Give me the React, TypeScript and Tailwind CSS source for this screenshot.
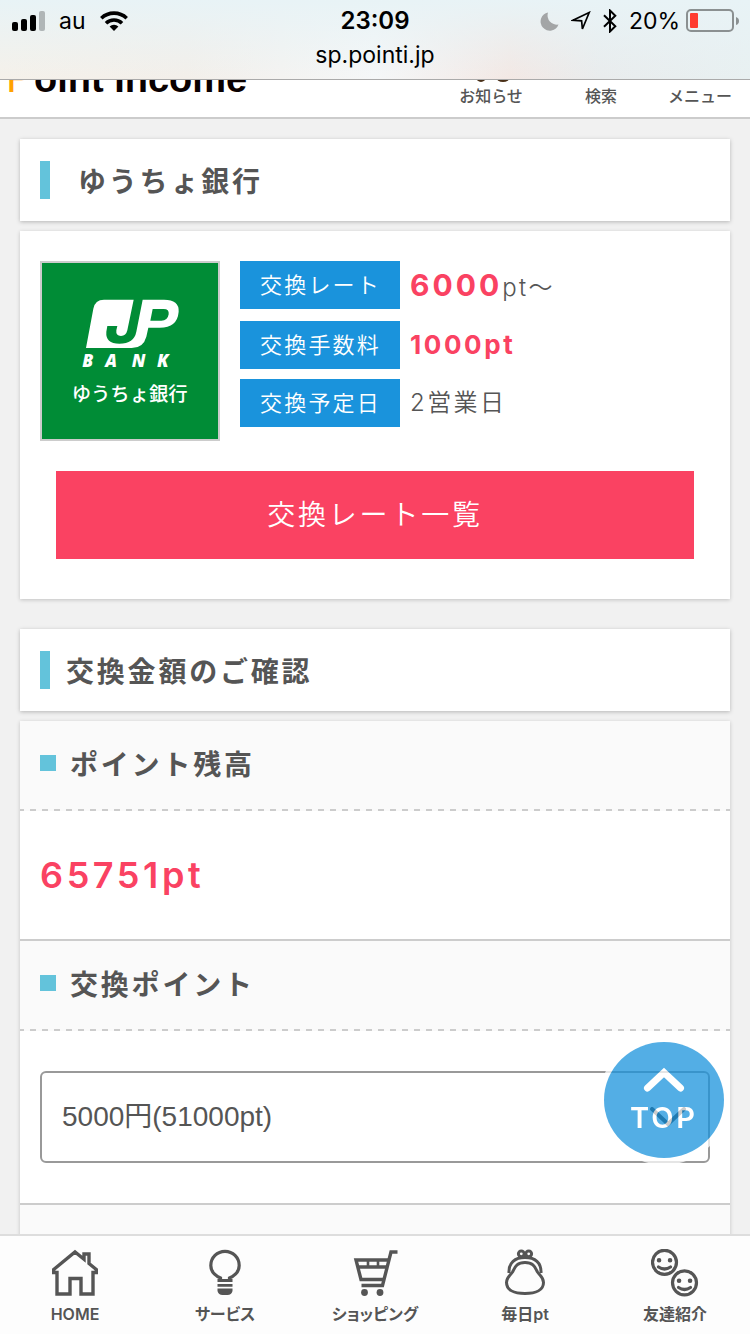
import type { ReactNode } from "react";

const NAV_ITEMS = [
  { label: "HOME", icon: <HomeIcon /> },
  { label: "サービス", icon: <BulbIcon /> },
  { label: "ショッピング", icon: <CartIcon /> },
  { label: "毎日pt", icon: <PurseIcon /> },
  { label: "友達紹介", icon: <SmileysIcon /> },
];

const AMOUNTS = ["5000円(51000pt)"];

export default function App() {
  return (
    <div className="flex h-dvh flex-col overflow-hidden bg-[#f1f1f1] font-['Liberation_Sans','Noto_Sans_CJK_JP',sans-serif] text-[#555]">
      <StatusBar />
      <SiteHeader />

      <main className="flex min-h-0 flex-1 flex-col overflow-hidden px-5 pt-5 font-['Noto_Sans_CJK_JP',sans-serif] *:shrink-0">
        <SectionTitle className="gap-7">ゆうちょ銀行</SectionTitle>

        <section className="mt-2.5 bg-white px-5 pt-[30px] pb-10 shadow-[0_1px_4px_rgba(0,0,0,0.2)]">
          <div className="flex gap-5">
            <BankLogo />
            <dl className="flex flex-1 flex-col gap-2.5">
              <RateRow label="交換レート" className="pb-0.5">
                <strong className="text-[30px] font-bold text-[#fa4262]">6000</strong>
                pt〜
              </RateRow>
              <RateRow label="交換手数料">
                <strong className="text-[26px] font-bold text-[#fa4262]">1000pt</strong>
              </RateRow>
              <RateRow label="交換予定日">2営業日</RateRow>
            </dl>
          </div>
          <button className="mx-4 mt-[30px] h-[88px] w-[calc(100%-32px)] bg-[#fa4262] pb-1 text-[28px] font-[350] tracking-widest text-white">
            交換レート一覧
          </button>
        </section>

        <SectionTitle className="mt-[30px] gap-4">交換金額のご確認</SectionTitle>

        <section className="mt-2.5 bg-white shadow-[0_1px_4px_rgba(0,0,0,0.2)]">
          <SubTitle>ポイント残高</SubTitle>
          <p className="box-content flex h-32 items-center border-b-2 border-[#ccc] px-5 font-['Inter',sans-serif] text-4xl font-semibold tracking-widest text-[#fa4262]">
            65751pt
          </p>
          <SubTitle id="amount-label">交換ポイント</SubTitle>
          <div className="border-b-2 border-[#ccc] px-5 py-10">
            <div className="relative">
              <select
                aria-labelledby="amount-label"
                className="block h-[92px] w-full appearance-none rounded-md border-2 border-[#999] bg-white px-5 font-['Liberation_Sans','Noto_Sans_CJK_JP',sans-serif] text-[28px] text-[#555]"
              >
                {AMOUNTS.map((amount) => (
                  <option key={amount}>{amount}</option>
                ))}
              </select>
              <svg
                className="pointer-events-none absolute top-9 right-6 h-5 w-9"
                viewBox="0 0 36 20"
                fill="none"
                stroke="#333"
                strokeWidth="4"
                strokeLinecap="round"
              >
                <path d="M2 2l16 15L34 2" />
              </svg>
            </div>
          </div>
          <div className="h-[88px] bg-[#fafafa]" />
        </section>
      </main>

      <TopButton />

      <nav className="grid grid-cols-5 border-t-2 border-[#ddd] bg-[#fdfdfd] pt-[13px] pb-2">
        {NAV_ITEMS.map((item) => (
          <a
            key={item.label}
            href="#"
            className="flex flex-col items-center gap-[5px] font-['Inter','Noto_Sans_CJK_JP',sans-serif] text-base leading-6 font-semibold [font-feature-settings:'palt']"
          >
            {item.icon}
            <span>{item.label}</span>
          </a>
        ))}
      </nav>
    </div>
  );
}

function StatusBar() {
  return (
    <div className="border-b border-[#aaa] bg-[linear-gradient(to_bottom,#e8f3f6,transparent),linear-gradient(to_right,#f5f1ea,#f3efea_25%,#f5f7f8_50%,#f3e8e4_68%,#e9eced_80%,#e8f0f1)] pt-[5px] pb-2 font-['Inter',sans-serif] text-[23px] leading-8 text-black">
      <div className="grid h-8 grid-cols-[1fr_auto_1fr] items-center">
        <div className="flex items-center gap-3.5 pl-3">
          <svg className="h-5 w-[33px]" viewBox="0 0 33 20">
            <rect x="0" y="11" width="6" height="9" rx="2" />
            <rect x="9" y="8" width="6" height="12" rx="2" />
            <rect x="18" y="4" width="6" height="16" rx="2" />
            <rect x="27" y="0" width="6" height="20" rx="2" fill="#b0b6b7" />
          </svg>
          <span>au</span>
          <svg className="h-5 w-7" viewBox="0 0 28 20" fill="none" stroke="#000" strokeWidth="3.6">
            <path d="M1.3 7.2a18.5 18.5 0 0 1 25.4 0" />
            <path d="M6 12.3a11.5 11.5 0 0 1 16 0" />
            <path d="M14 20l-4.4-4.6a6.4 6.4 0 0 1 8.8 0z" fill="#000" stroke="none" />
          </svg>
        </div>
        <span className="text-2xl leading-8 font-semibold">23:09</span>
        <div className="flex items-center justify-end pr-2.5">
          <svg className="mr-3 size-[19px]" viewBox="0 0 19 19" fill="#a3a5a6">
            <path d="M8 .5A9.200 9.200 0 1 0 18.500 12.500 9.300 9.300 0 0 1 8 .5z" />
          </svg>
          <svg className="mr-3 size-5" viewBox="0 0 20 20" fill="none" stroke="#000" strokeWidth="1.7">
            <path d="M18.200 1.500L2 9.200l8.600.6.8 8.200z" />
          </svg>
          <svg className="mr-3 h-6 w-3.5" viewBox="0 0 14 24" fill="none" stroke="#000" strokeWidth="2">
            <path d="M1 6.300l11.300 11L7 22.500v-21l5.300 5.200L1 17.700" />
          </svg>
          <span>20%</span>
          <svg className="ml-1.5 h-6 w-[54px]" viewBox="0 0 54 24">
            <rect x="1" y="1" width="46" height="21" rx="4" fill="none" stroke="#8b9091" strokeWidth="2" />
            <rect x="4" y="4" width="8" height="15" rx="1" fill="#ff3b30" />
            <path d="M50 8q3 1 3 4t-3 4z" fill="#8b9091" />
          </svg>
        </div>
      </div>
      <p className="pt-0.5 text-center">sp.pointi.jp</p>
    </div>
  );
}

// The header is scrolled half under the status bar, so its content hangs from the bottom edge.
function SiteHeader() {
  return (
    <header className="flex h-[39px] items-end justify-between overflow-hidden border-b-2 border-[#ccc] bg-white px-1.5">
      <a href="#" className="pb-[19px] text-[38px] leading-[38px] font-bold whitespace-nowrap text-[#0a0000]">
        <span className="text-[42px] font-normal text-[#ffa200]">P</span>oint Income
      </a>
      <div className="flex items-end pb-2.5 font-['Noto_Sans_CJK_JP',sans-serif] text-base leading-6 font-medium">
        <a href="#" className="flex w-[110px] flex-col items-center">
          <svg className="h-2.5 w-9" viewBox="0 0 36 10" fill="#e0a32a" stroke="#4a3018" strokeWidth="2">
            <ellipse cx="8" cy="4" rx="4" ry="4" fill="#7a4a20" />
            <ellipse cx="30" cy="4" rx="6" ry="4" />
          </svg>
          お知らせ
        </a>
        <a href="#" className="w-[110px] text-center">検索</a>
        <a href="#" className="w-[88px] text-center">メニュー</a>
      </div>
    </header>
  );
}

function SectionTitle({ className, children }: { className: string; children: ReactNode }) {
  return (
    <h2
      className={`flex h-[82px] items-center bg-white px-5 text-[28px] font-bold tracking-widest shadow-[0_1px_4px_rgba(0,0,0,0.25)] ${className}`}
    >
      <span className="h-[38px] w-2.5 bg-[#63c3db]" />
      {children}
    </h2>
  );
}

function SubTitle({ id, children }: { id?: string; children: ReactNode }) {
  return (
    <div className="bg-[#fafafa]">
      <h3 id={id} className="flex h-[88px] items-center gap-3.5 px-5 pb-1 text-[28px] font-bold tracking-widest">
        <span className="size-4 bg-[#63c3db]" />
        {children}
      </h3>
      <div className="h-0.5 bg-[repeating-linear-gradient(to_right,#ccc_0_4px,transparent_4px_10px,#ccc_10px_12px)]" />
    </div>
  );
}

function RateRow({ label, className = "", children }: { label: string; className?: string; children: ReactNode }) {
  return (
    <div className={`flex gap-2.5 ${className}`}>
      <dt className="flex h-12 w-40 items-center bg-[#1a93dc] pb-1 pl-5 text-[22px] font-[350] tracking-widest text-white">
        {label}
      </dt>
      <dd className="h-12 font-['Inter','Noto_Sans_CJK_JP',sans-serif] text-2xl leading-[48px] font-[350] tracking-widest *:tracking-widest">
        {children}
      </dd>
    </div>
  );
}

function BankLogo() {
  return (
    <div className="size-[180px] shrink-0 border-2 border-[#ccc] bg-[#008c36]">
      <svg className="size-full" viewBox="66 399 528 528" fill="#fff" role="img" aria-label="JP BANK">
        <path
          fillRule="evenodd"
          d="M198 654l22-118q5-27 32-27h89l-19 92q-4 17-19 17-16 0-14-17l3-13h-30l-3 17q-3 36 39 36 44 0 51-36l19-96h64q46 0 44 36-4 48-57 48h-34l-6 27q-9 34-44 34zM398 537l-7 35h33q19 0 22-19 2-16-15-16z"
        />
        <text
          x="187 256 335 411"
          y="712"
          className="font-['Open_Sans',sans-serif] text-[52px] font-extrabold italic"
        >
          BANK
        </text>
        <text x="329" y="812" textAnchor="middle" className="font-['Noto_Sans_CJK_JP',sans-serif] text-[58px] font-medium">
          ゆうちょ銀行
        </text>
      </svg>
    </div>
  );
}

function TopButton() {
  return (
    <button className="fixed right-[26px] bottom-[168px] h-[124px] w-[120px] opacity-75">
      <svg className="size-full" viewBox="0 0 120 124">
        <circle cx="60" cy="58" r="65" fill="#fff" />
        <ellipse cx="60" cy="58" rx="60" ry="58" fill="#1a93dc" />
        <path
          d="M43.500 46L60 30.500 76.500 46"
          fill="none"
          stroke="#fff"
          strokeWidth="7"
          strokeLinecap="round"
        />
        <text
          x="60"
          y="86"
          textAnchor="middle"
          fill="#fff"
          className="font-['Inter',sans-serif] text-[29px] font-semibold tracking-widest"
        >
          TOP
        </text>
      </svg>
    </button>
  );
}

function HomeIcon() {
  return (
    <svg className="size-12" viewBox="0 0 48 48" fill="none" stroke="#555" strokeWidth="3.4">
      <path d="M2.700 23.500V20.500L24 3l9 7.300V5h5v9.500L45.300 20.500v3H42V45H30V29.500H19V45H6V23.500z" />
    </svg>
  );
}

function BulbIcon() {
  return (
    <svg className="size-12" viewBox="0 0 48 48" fill="none" stroke="#555" strokeWidth="3.2">
      <path d="M19.500 32v-3C14 26.500 9.800 23 9.800 16.500a14.200 14.200 0 0 1 28.400 0c0 6.500-4.200 10-9.700 12.500v3" />
      <path d="M16.500 31.500h15M16.500 36.300h15" strokeWidth="2.800" />
      <path d="M16.500 39.500h15v2.500q-1 4-5 4h-5q-4 0-5-4z" fill="#555" stroke="none" />
    </svg>
  );
}

function CartIcon() {
  return (
    <svg className="size-12" viewBox="0 0 48 48" fill="none" stroke="#555" strokeWidth="3.400">
      <path d="M46.500 3h-6.500L31.500 36.500H10.500" />
      <path d="M38 11H5l5 19.500h23M6.500 18H36" />
      <path d="M17 12v6M27 12v6" strokeWidth="2.600" />
      <circle cx="13.500" cy="43.500" r="3.400" fill="#555" stroke="none" />
      <circle cx="29" cy="43.500" r="3.400" fill="#555" stroke="none" />
    </svg>
  );
}

function PurseIcon() {
  return (
    <svg className="size-12" viewBox="0 0 48 48" fill="none" stroke="#555" strokeWidth="3">
      <path d="M8 24C7.500 13.500 14 8.500 24 8.500S40.500 13.500 40 24" />
      <path d="M24 13.500c-9 0-10 5-12.500 9.500C9 27 5.500 28 5.500 33.500 5.500 41 13 44.500 24 44.500s18.500-3.500 18.500-11c0-5.500-3.500-6.500-6-10.500C34 18.500 33 13.500 24 13.500z" />
      <circle cx="20.300" cy="4.800" r="2.900" />
      <circle cx="27.700" cy="4.800" r="2.900" />
    </svg>
  );
}

function SmileysIcon() {
  return (
    <svg className="size-12" viewBox="0 0 48 48" fill="none" stroke="#555" strokeWidth="3.200" strokeLinecap="round">
      <circle cx="13.500" cy="13.300" r="12" />
      <path d="M7.500 18q6 4 12 0" />
      <path d="M8 11.300h.1M19 11.300h.1" strokeWidth="4.500" />
      <circle cx="33.500" cy="33.800" r="12" />
      <path d="M27.500 38.500q6 4 12 0" />
      <path d="M28 31.800h.1M39 31.800h.1" strokeWidth="4.500" />
    </svg>
  );
}
